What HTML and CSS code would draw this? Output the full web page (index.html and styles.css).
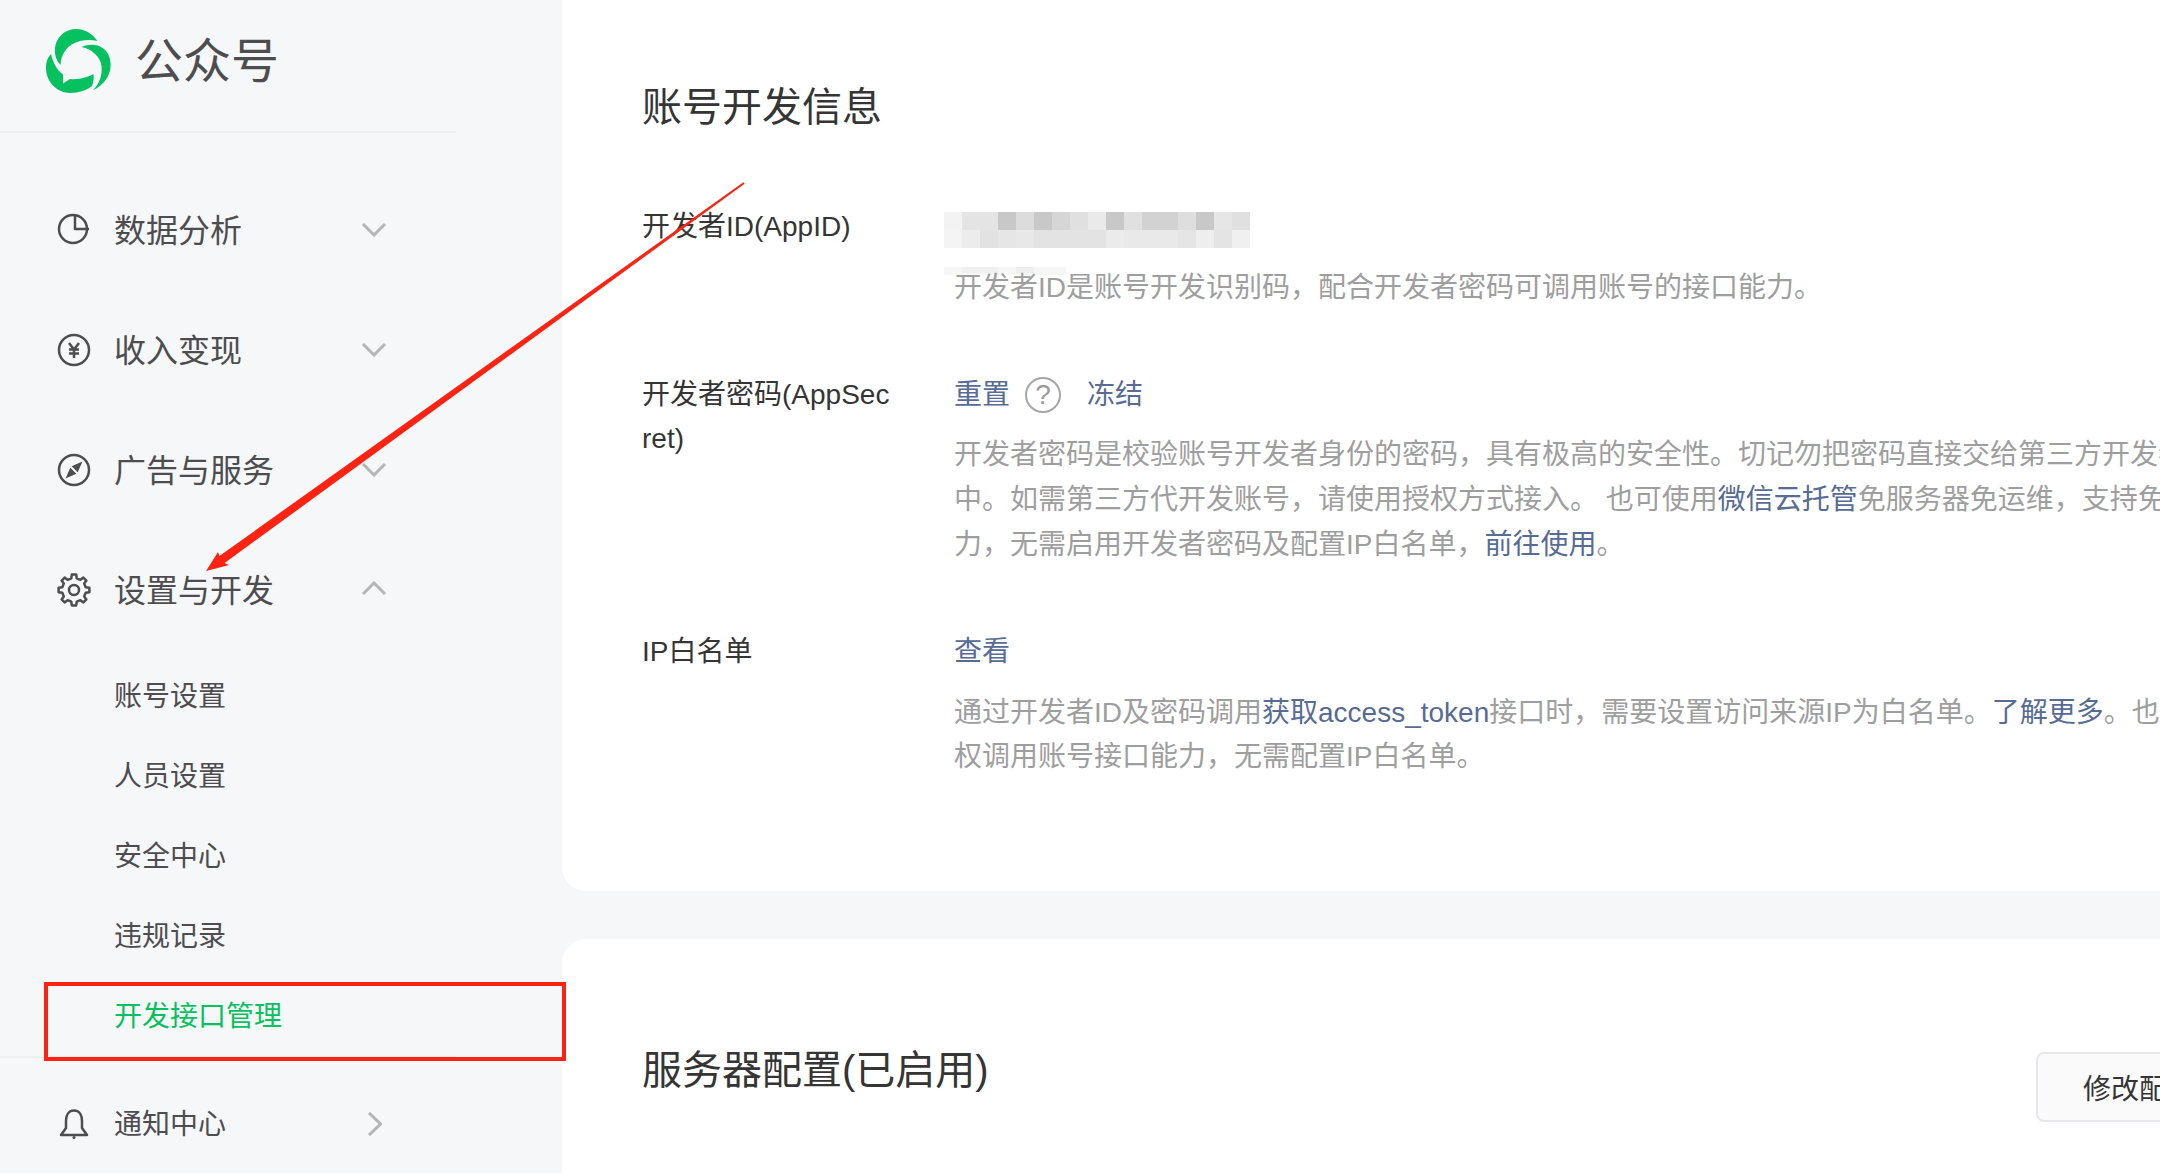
FILE: index.html
```html
<!DOCTYPE html>
<html lang="zh-CN">
<head>
    <meta charset="UTF-8">
    <title>开发接口管理</title>
    <link rel="stylesheet" href="styles.css">
</head>
<body>
    <div class="page">
        <div class="sidebar">
            <div class="brand">
                <svg class="logo" viewBox="0 0 66 66" fill="#07c160">
                    <path d="M51.5 12C46 4 38 0 30.5 0C19 0 10 8 9 19C8.5 26 10 31 14.5 36C15 24 22 15 34 12C40 10.5 46 10.5 51.5 12Z"/>
                    <path d="M35.5 18C44 14 54 15 60 22C66 29 66 41 61 49C57 55 52 59 47 61C53 55 56.5 47 55.5 37C54.5 28 46 20 35.5 18Z"/>
                    <path d="M5 25C1 29 0 34 0 39C0 53 11 64 24.5 64C33 64 41 61 46 57C47.5 53 48 49 47.5 45C42 48 33 51 24 50L17 54.5L17 45.5C11 41 7 34 5 25Z"/>
                </svg>
                <span class="brand-name">公众号</span>
            </div>

            <div class="nav">
                <div class="nav-item">
                    <svg class="nav-icon" viewBox="0 0 32 32"><circle cx="15" cy="15" r="14"/><path d="M17 1V15H31"/></svg>
                    <span>数据分析</span>
                    <svg class="chevron" viewBox="0 0 24 14"><path d="M1 1L12 12L23 1"/></svg>
                </div>
                <div class="nav-item">
                    <svg class="nav-icon" viewBox="0 0 32 32"><circle cx="16" cy="16" r="15"/><path d="M11 9L16 15.5L21 9M11 15.5H21M11 19.5H21M16 15.5V24"/></svg>
                    <span>收入变现</span>
                    <svg class="chevron" viewBox="0 0 24 14"><path d="M1 1L12 12L23 1"/></svg>
                </div>
                <div class="nav-item">
                    <svg class="nav-icon" viewBox="0 0 32 32">
                        <circle cx="16" cy="16" r="15"/>
                        <polygon class="solid" points="24.5,7.5 19.7,18.3 13.7,12.3"/>
                        <polygon class="solid" points="7.5,24.5 18.3,19.7 12.3,13.7"/>
                    </svg>
                    <span>广告与服务</span>
                    <svg class="chevron" viewBox="0 0 24 14"><path d="M1 1L12 12L23 1"/></svg>
                </div>
                <div class="nav-item">
                    <svg class="nav-icon gear" viewBox="-18 -18 36 36">
                        <polygon points="-2.2,-15.4 2.2,-15.4 2.7,-11.7 6.4,-10.2 9.4,-12.4 12.4,-9.4 10.2,-6.4 11.7,-2.7 15.4,-2.2 15.4,2.2 11.7,2.7 10.2,6.4 12.4,9.4 9.4,12.4 6.4,10.2 2.7,11.7 2.2,15.4 -2.2,15.4 -2.7,11.7 -6.4,10.2 -9.4,12.4 -12.4,9.4 -10.2,6.4 -11.7,2.7 -15.4,2.2 -15.4,-2.2 -11.7,-2.7 -10.2,-6.4 -12.4,-9.4 -9.4,-12.4 -6.4,-10.2 -2.7,-11.7"/>
                        <circle cx="0" cy="0" r="5"/>
                    </svg>
                    <span>设置与开发</span>
                    <svg class="chevron chevron-up" viewBox="0 0 24 14"><path d="M1 13L12 2L23 13"/></svg>
                </div>
                <div class="sub-nav">
                    <div class="sub-item">账号设置</div>
                    <div class="sub-item">人员设置</div>
                    <div class="sub-item">安全中心</div>
                    <div class="sub-item">违规记录</div>
                    <div class="sub-item active">开发接口管理</div>
                </div>
            </div>

            <div class="sidebar-foot">
                <div class="foot-item">
                    <svg class="nav-icon" viewBox="0 0 32 32">
                        <path d="M16 2.5C10 2.5 8 8 8 13V20L3 27H29L24 20V13C24 8 22 2.5 16 2.5Z"/>
                        <circle class="solid" cx="16" cy="29.5" r="1.5"/>
                    </svg>
                    <span>通知中心</span>
                    <svg class="chevron-right" viewBox="0 0 14 24"><path d="M1 1L12.5 12L1 23"/></svg>
                </div>
            </div>
        </div>

        <div class="main">
            <div class="card card-dev">
                <h2>账号开发信息</h2>
                <div class="form-row">
                    <div class="label">开发者ID(AppID)</div>
                    <div class="field">
                        <div class="value">
                            <svg class="mosaic" width="306" height="36" shape-rendering="crispEdges">
                                <rect x="0" y="0" width="18" height="18" fill="#f3f3f3"/>
                                <rect x="18" y="0" width="36" height="18" fill="#e4e4e4"/>
                                <rect x="54" y="0" width="18" height="18" fill="#c8c8c8"/>
                                <rect x="72" y="0" width="18" height="18" fill="#dcdcdc"/>
                                <rect x="90" y="0" width="18" height="18" fill="#c8c8c8"/>
                                <rect x="108" y="0" width="18" height="18" fill="#d6d6d6"/>
                                <rect x="126" y="0" width="18" height="18" fill="#e0e0e0"/>
                                <rect x="144" y="0" width="18" height="18" fill="#eaeaea"/>
                                <rect x="162" y="0" width="18" height="18" fill="#c8c8c8"/>
                                <rect x="180" y="0" width="18" height="18" fill="#e0e0e0"/>
                                <rect x="198" y="0" width="36" height="18" fill="#d2d2d2"/>
                                <rect x="234" y="0" width="18" height="18" fill="#dedede"/>
                                <rect x="252" y="0" width="18" height="18" fill="#c8c8c8"/>
                                <rect x="270" y="0" width="18" height="18" fill="#e6e6e6"/>
                                <rect x="288" y="0" width="18" height="18" fill="#e0e0e0"/>
                                <rect x="0" y="18" width="18" height="18" fill="#f4f4f4"/>
                                <rect x="18" y="18" width="18" height="18" fill="#ececec"/>
                                <rect x="36" y="18" width="18" height="18" fill="#e2e2e2"/>
                                <rect x="54" y="18" width="18" height="18" fill="#e6e6e6"/>
                                <rect x="72" y="18" width="18" height="18" fill="#e8e8e8"/>
                                <rect x="90" y="18" width="90" height="18" fill="#e3e3e3"/>
                                <rect x="162" y="18" width="18" height="18" fill="#ebebeb"/>
                                <rect x="180" y="18" width="54" height="18" fill="#e9e9e9"/>
                                <rect x="234" y="18" width="18" height="18" fill="#e5e5e5"/>
                                <rect x="252" y="18" width="18" height="18" fill="#eeeeee"/>
                                <rect x="270" y="18" width="18" height="18" fill="#e4e4e4"/>
                                <rect x="288" y="18" width="18" height="18" fill="#f0f0f0"/>
                                <rect x="0" y="55" width="122" height="8" fill="#f6f6f6"/>
                                <rect x="18" y="55" width="36" height="6" fill="#f1f1f1"/>
                                <rect x="72" y="55" width="18" height="6" fill="#eeeeee"/>
                            </svg>
                        </div>
                        <div class="desc">开发者ID是账号开发识别码，配合开发者密码可调用账号的接口能力。</div>
                    </div>
                </div>
                <div class="form-row">
                    <div class="label">开发者密码(AppSecret)</div>
                    <div class="field">
                        <div class="value">
                            <a class="link">重置</a>
                            <span class="help">?</span>
                            <a class="link">冻结</a>
                        </div>
                        <div class="desc">开发者密码是校验账号开发者身份的密码，具有极高的安全性。切记勿把密码直接交给第三方开发者或直接存储在代码<br>中。如需第三方代开发账号，请使用授权方式接入。 也可使用<a class="link">微信云托管</a>免服务器免运维，支持免密钥调用接口能<br>力，无需启用开发者密码及配置IP白名单，<a class="link">前往使用</a>。</div>
                    </div>
                </div>
                <div class="form-row">
                    <div class="label">IP白名单</div>
                    <div class="field">
                        <div class="value"><a class="link">查看</a></div>
                        <div class="desc">通过开发者ID及密码调用<a class="link">获取access_token</a>接口时，需要设置访问来源IP为白名单。<a class="link">了解更多</a>。也可使用授<br>权调用账号接口能力，无需配置IP白名单。</div>
                    </div>
                </div>
            </div>

            <div class="card card-server">
                <h2>服务器配置(已启用)</h2>
                <button class="btn">修改配置</button>
            </div>
        </div>
    </div>

    <!-- red markup drawn over the screenshot -->
    <svg class="markup" width="2160" height="1174">
        <polygon points="744.6,183.8 476.6,379.3 224.6,563 229,565 206,571 218,552 219.4,556 473.4,374.7 743.4,182.2"/>
        <rect class="markup-box" x="46" y="984" width="518" height="75"/>
    </svg>
</body>
</html>
```

FILE: styles.css
```css
* { box-sizing: border-box; }
html, body { margin: 0; height: 100%; overflow: hidden; background: #fff; }
body { font-family: "Liberation Sans", "Noto Sans CJK SC", sans-serif; color: #353535; }

.page { display: flex; width: 2160px; height: 1174px; }

/* Sidebar */
.sidebar { width: 562px; height: 1173px; flex-shrink: 0; background: #f6f7f9; color: #4d4d4f; }
.brand { display: flex; align-items: center; gap: 23px; width: 456px; height: 133px; padding: 2px 0 9px 46px; border-bottom: 2px solid #eff0f2; }
.logo { width: 66px; height: 66px; }
.brand-name { font-size: 48px; line-height: 64px; }

.nav { padding-top: 37px; }
.nav-item { display: flex; align-items: center; width: 386px; height: 120px; padding-left: 58px; font-size: 32px; }
.nav-item span, .foot-item span { padding-bottom: 4px; }
.nav-icon { width: 32px; height: 32px; margin-right: 24px; flex-shrink: 0; fill: none; stroke: #4d4d4f; stroke-width: 2.5; stroke-linejoin: round; overflow: visible; }
.nav-icon .solid { fill: #4d4d4f; stroke: none; }
.nav-icon.gear { width: 36px; height: 36px; margin-left: -2px; margin-right: 22px; }
.chevron { width: 24px; height: 14px; margin-left: auto; fill: none; stroke: #b5b5b5; stroke-width: 3; }
.chevron-up { margin-bottom: 4px; }

.sub-nav { padding-top: 7px; }
.sub-item { height: 80px; padding-left: 114px; font-size: 28px; line-height: 80px; }
.sub-item.active { color: #07c160; }

.sidebar-foot { width: 456px; padding-top: 26px; border-top: 2px solid #eff0f2; margin-top: -1px; }
.foot-item { display: flex; align-items: center; width: 382px; height: 80px; padding-left: 58px; font-size: 28px; }
.chevron-right { width: 14px; height: 24px; margin-left: auto; fill: none; stroke: #b5b5b5; stroke-width: 3; }

/* Content */
.main { flex: 1; height: 1174px; overflow: hidden; background: #f6f7f9; }
.card { width: 1760px; background: #fff; padding-left: 80px; padding-right: 80px; }
.card h2 { margin: 0; font-size: 40px; font-weight: normal; line-height: 56px; color: #353535; }
.card-dev { height: 891px; padding-top: 79px; border-bottom-left-radius: 24px; }
.card-server { display: flex; justify-content: space-between; align-items: flex-start; height: 235px; margin-top: 48px; padding-top: 103px; border-top-left-radius: 24px; }

.form-row { display: flex; margin-top: 62px; font-size: 28px; line-height: 44.8px; }
.card-dev h2 + .form-row { margin-top: 70px; }
.label { width: 256px; margin-right: 56px; flex-shrink: 0; word-break: break-all; color: #353535; }
.field { white-space: nowrap; }
.value { display: flex; align-items: center; height: 44.8px; margin-bottom: 16px; }
.desc { color: #9e9e9e; }
.link { color: #576b95; }

.mosaic { margin-left: -10px; margin-top: 5px; overflow: visible; }
.help { width: 36px; height: 36px; margin: 0 26px 0 15px; border: 2px solid #a6a6a6; border-radius: 50%; color: #9a9a9a; font-size: 28px; line-height: 32px; text-align: center; }

.btn { height: 70px; margin-top: 10px; padding: 0 45px; background: #fafafa; border: 2px solid #e5e7ea; border-radius: 8px; color: #353535; font-family: inherit; font-size: 28px; }

/* Markup layer */
.markup { position: absolute; left: 0; top: 0; fill: #fc2312; }
.markup-box { fill: none; stroke: #fc2312; stroke-width: 4; }
```
